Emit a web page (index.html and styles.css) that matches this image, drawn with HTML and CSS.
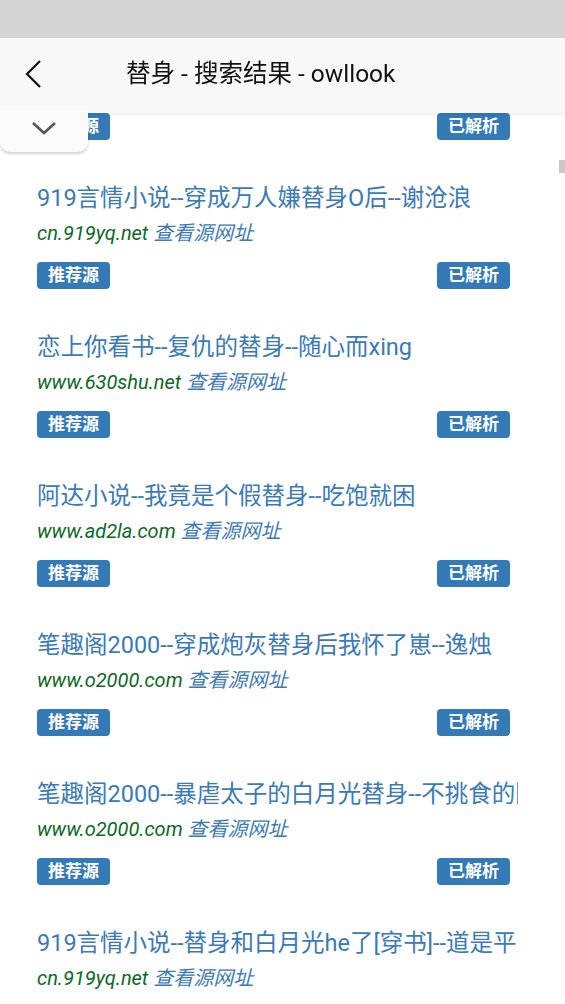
FILE: index.html
```html
<!DOCTYPE html>
<html lang="zh">
<head>
<meta charset="utf-8">
<title>替身 - 搜索结果 - owllook</title>
<link rel="stylesheet" href="styles.css">
</head>
<body>
<div class="topbar">
  <div class="status"></div>
  <div class="header">
    <svg class="back" width="20" height="30" viewBox="0 0 20 30"><path d="M17 2 L4 15 L17 28" fill="none" stroke="#111" stroke-width="2.2"/></svg>
    <div class="title">替身 - 搜索结果 - owllook</div>
  </div>
  <div class="tab">
    <svg width="26" height="16" viewBox="0 0 26 16"><path d="M2 3 L13 13 L24 3" fill="none" stroke="#555" stroke-width="2.6"/></svg>
  </div>
</div>
<div class="scroll-thumb"></div>
<ul class="list">
  <li class="item">
    <div class="name">笔趣阁--替身--未知</div>
    <div class="src"><span class="domain">www.biquge.com</span> <span class="link">查看源网址</span></div>
    <div class="badges"><span class="badge">推荐源</span><span class="badge">已解析</span></div>
  </li>
  <li class="item">
    <div class="name">919言情小说--穿成万人嫌替身O后--谢沧浪</div>
    <div class="src"><span class="domain">cn.919yq.net</span> <span class="link">查看源网址</span></div>
    <div class="badges"><span class="badge">推荐源</span><span class="badge">已解析</span></div>
  </li>
  <li class="item">
    <div class="name">恋上你看书--复仇的替身--随心而xing</div>
    <div class="src"><span class="domain">www.630shu.net</span> <span class="link">查看源网址</span></div>
    <div class="badges"><span class="badge">推荐源</span><span class="badge">已解析</span></div>
  </li>
  <li class="item">
    <div class="name">阿达小说--我竟是个假替身--吃饱就困</div>
    <div class="src"><span class="domain">www.ad2la.com</span> <span class="link">查看源网址</span></div>
    <div class="badges"><span class="badge">推荐源</span><span class="badge">已解析</span></div>
  </li>
  <li class="item">
    <div class="name">笔趣阁2000--穿成炮灰替身后我怀了崽--逸烛</div>
    <div class="src"><span class="domain">www.o2000.com</span> <span class="link">查看源网址</span></div>
    <div class="badges"><span class="badge">推荐源</span><span class="badge">已解析</span></div>
  </li>
  <li class="item">
    <div class="name">笔趣阁2000--暴虐太子的白月光替身--不挑食的阿猫</div>
    <div class="src"><span class="domain">www.o2000.com</span> <span class="link">查看源网址</span></div>
    <div class="badges"><span class="badge">推荐源</span><span class="badge">已解析</span></div>
  </li>
  <li class="item">
    <div class="name">919言情小说--替身和白月光he了[穿书]--道是平生</div>
    <div class="src"><span class="domain">cn.919yq.net</span> <span class="link">查看源网址</span></div>
    <div class="badges"><span class="badge">推荐源</span><span class="badge">已解析</span></div>
  </li>
</ul>
</body>
</html>
```
FILE: styles.css
```css
html, body {
  margin: 0;
  padding: 0;
  background: #fff;
  font-family: Roboto, "Noto Sans CJK SC", sans-serif;
  overflow: hidden;
  height: 1004px;
}
.topbar {
  position: fixed;
  top: 0;
  left: 0;
  right: 0;
  z-index: 10;
}
.status {
  height: 38px;
  background: #d4d4d4;
}
.header {
  height: 75px;
  background: #f8f8f8;
  box-shadow: 0 2px 4px rgba(0,0,0,0.08);
  display: flex;
  align-items: center;
  padding-left: 23px;
  box-sizing: border-box;
}
.back {
  display: block;
  margin-top: -4px;
}
.title {
  margin-left: 83px;
  font-size: 24.5px;
  color: #111;
  margin-top: -9px;
}
.tab {
  position: absolute;
  left: 0;
  top: 110px;
  width: 88px;
  height: 42px;
  background: #fafafa;
  border-radius: 0 0 10px 10px;
  box-shadow: 0 2px 3px rgba(0,0,0,0.18);
  display: flex;
  align-items: center;
  justify-content: center;
}
.tab svg {
  display: block;
  margin-top: -6px;
}
.scroll-thumb {
  position: fixed;
  right: 0;
  top: 160px;
  width: 6px;
  height: 13px;
  background: #c8c8c8;
}
.list {
  list-style: none;
  margin: 0;
  padding: 34px 0 0 37px;
  width: 481px;
}
.item {
  padding-bottom: 43px;
}
.name {
  font-size: 23.5px;
  line-height: 30px;
  color: #3a7ab6;
  white-space: nowrap;
  overflow: hidden;
}
.src {
  margin-top: 6px;
  font-size: 20px;
  line-height: 28px;
  font-style: italic;
  white-space: nowrap;
}
.domain {
  color: #0b6a25;
}
.link {
  color: #3d7ab5;
}
.badges {
  margin-top: 15px;
  display: flex;
  justify-content: space-between;
  width: 473px;
}
.badge {
  display: block;
  height: 27px;
  line-height: 27px;
  width: 73px;
  text-align: center;
  background: #337ab7;
  color: #fff;
  font-weight: bold;
  font-size: 17px;
  border-radius: 4px;
}
```
